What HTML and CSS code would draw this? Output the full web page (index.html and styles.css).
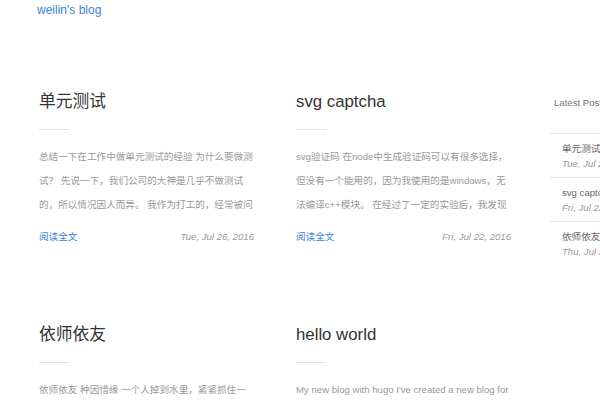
FILE: index.html
```html
<!DOCTYPE html>
<html lang="zh-CN">
<head>
<meta charset="utf-8">
<title>weilin's blog</title>
<link rel="stylesheet" href="styles.css">
</head>
<body>
<header class="site-header">
  <a class="brand" href="#">weilin's blog</a>
</header>
<main class="main">
  <section class="posts">
    <article class="post">
      <h2 class="post-title">单元测试</h2>
      <div class="rule"></div>
      <p class="excerpt">总结一下在工作中做单元测试的经验 为什么要做测试？ 先说一下，我们公司的大神是几乎不做测试的，所以情况因人而异。 我作为打工的，经常被问</p>
      <div class="post-foot">
        <a class="more" href="#">阅读全文</a>
        <span class="date">Tue, Jul 26, 2016</span>
      </div>
    </article>
    <article class="post">
      <h2 class="post-title">svg captcha</h2>
      <div class="rule"></div>
      <p class="excerpt">svg验证码 在node中生成验证码可以有很多选择，但没有一个能用的，因为我使用的是windows，无法编译c++模块。 在经过了一定的实验后，我发现</p>
      <div class="post-foot">
        <a class="more" href="#">阅读全文</a>
        <span class="date">Fri, Jul 22, 2016</span>
      </div>
    </article>
    <article class="post">
      <h2 class="post-title">依师依友</h2>
      <div class="rule"></div>
      <p class="excerpt">依师依友 种因惜缘 一个人掉到水里，紧紧抓住一根稻草，就以为抓住了生命的全部。</p>
      <div class="post-foot">
        <a class="more" href="#">阅读全文</a>
        <span class="date">Thu, Jul 21, 2016</span>
      </div>
    </article>
    <article class="post">
      <h2 class="post-title">hello world</h2>
      <div class="rule"></div>
      <p class="excerpt">My new blog with hugo I've created a new blog for myself with hugo and it works well.</p>
      <div class="post-foot">
        <a class="more" href="#">阅读全文</a>
        <span class="date">Wed, Jul 20, 2016</span>
      </div>
    </article>
  </section>
  <aside class="sidebar">
    <h3 class="side-title">Latest Posts</h3>
    <ul class="side-list">
      <li class="side-item"><a class="side-link" href="#">单元测试</a><span class="side-date">Tue, Jul 26, 2016</span></li>
      <li class="side-item"><a class="side-link" href="#">svg captcha</a><span class="side-date">Fri, Jul 22, 2016</span></li>
      <li class="side-item"><a class="side-link" href="#">依师依友</a><span class="side-date">Thu, Jul 21, 2016</span></li>
    </ul>
  </aside>
</main>
</body>
</html>
```
FILE: styles.css
```css
html, body {
  margin: 0;
  padding: 0;
  overflow: hidden;
  background: #fff;
}
body {
  font-family: "Liberation Sans", "Noto Sans CJK SC", sans-serif;
  font-size: 12px;
  color: #333;
}
a {
  text-decoration: none;
}
.site-header {
  padding: 2px 0 0 37px;
  line-height: 16px;
}
.brand {
  color: #3b83d6;
  font-size: 12px;
}
.main {
  display: flex;
  padding: 72px 0 0 39px;
  width: 900px;
}
.posts {
  display: grid;
  grid-template-columns: 215px 215px;
  column-gap: 42px;
  row-gap: 76px;
  flex-shrink: 0;
}
.post-title {
  margin: 0;
  font-size: 16.8px;
  line-height: 24px;
  font-weight: normal;
  color: #333;
}
.rule {
  width: 30px;
  height: 1px;
  background: #e3e3e3;
  margin-top: 15px;
}
.excerpt {
  margin: 15px 0 0;
  font-size: 9.6px;
  line-height: 24px;
  color: #999;
  max-height: 72px;
  overflow: hidden;
}
.post-foot {
  display: flex;
  justify-content: space-between;
  align-items: center;
  margin-top: 10px;
  line-height: 20px;
  font-size: 9.6px;
}
.more {
  color: #3b83d6;
}
.date {
  font-style: italic;
  color: #999;
}
.sidebar {
  margin-left: 39px;
  width: 220px;
  flex-shrink: 0;
  padding-top: 3px;
}
.side-title {
  margin: 0 0 20px;
  padding-left: 4px;
  font-size: 9.6px;
  line-height: 20px;
  font-weight: normal;
  color: #777;
}
.side-list {
  list-style: none;
  margin: 0;
  padding: 0;
}
.side-item {
  display: flex;
  flex-direction: column;
  border-top: 1px solid #e5e5e5;
  padding: 7px 12px 6px;
  font-size: 9.6px;
  line-height: 15px;
}
.side-link {
  color: #666;
}
.side-date {
  font-style: italic;
  color: #999;
}
```
